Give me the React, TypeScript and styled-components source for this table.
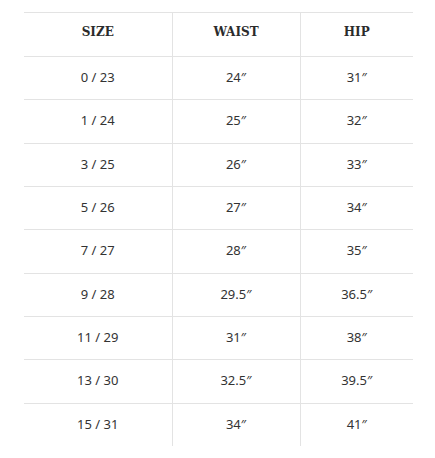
import React from "react";
import styled, { createGlobalStyle } from "styled-components";

interface SizeRow {
  size: string;
  waist: string;
  hip: string;
}

const ROWS: SizeRow[] = [
  { size: "0 / 23", waist: "24″", hip: "31″" },
  { size: "1 / 24", waist: "25″", hip: "32″" },
  { size: "3 / 25", waist: "26″", hip: "33″" },
  { size: "5 / 26", waist: "27″", hip: "34″" },
  { size: "7 / 27", waist: "28″", hip: "35″" },
  { size: "9 / 28", waist: "29.5″", hip: "36.5″" },
  { size: "11 / 29", waist: "31″", hip: "38″" },
  { size: "13 / 30", waist: "32.5″", hip: "39.5″" },
  { size: "15 / 31", waist: "34″", hip: "41″" },
];

const GlobalStyle = createGlobalStyle`
  html, body {
    margin: 0;
    padding: 0;
    background: #ffffff;
  }
`;

const App: React.FC = () => {
  return (
    <>
      <GlobalStyle />
      <SPage>
        <SChart>
          <colgroup>
            <col style={{ width: 148 }} />
            <col style={{ width: 128 }} />
            <col style={{ width: 113 }} />
          </colgroup>
          <thead>
            <tr>
              <SHeadCell>SIZE</SHeadCell>
              <SHeadCell>WAIST</SHeadCell>
              <SHeadCell>HIP</SHeadCell>
            </tr>
          </thead>
          <tbody>
            {ROWS.map((row) => (
              <tr key={row.size}>
                <SCell>{row.size}</SCell>
                <SCell>{row.waist}</SCell>
                <SCell>{row.hip}</SCell>
              </tr>
            ))}
          </tbody>
        </SChart>
      </SPage>
    </>
  );
};

const SPage = styled.div`
  padding: 12px 0 0 24px;
`;

const SChart = styled.table`
  width: 389px;
  border-collapse: collapse;
  table-layout: fixed;
  color: #333333;

  th + th,
  td + td {
    border-left: 1px solid #e3e3e3;
  }
`;

const SHeadCell = styled.th`
  height: 38px;
  padding: 0 0 5px;
  border-top: 1px solid #e3e3e3;
  text-align: center;
  font-family: "DejaVu Serif", serif;
  font-size: 12px;
  font-weight: 700;
  line-height: 16px;
  color: #2b2b2b;
`;

const SCell = styled.td`
  height: 40.33px;
  padding: 0 0 2px;
  border-top: 1px solid #e3e3e3;
  text-align: center;
  font-family: "Noto Sans", sans-serif;
  font-size: 13px;
  line-height: 18px;
  color: #333333;
`;

export default App;
